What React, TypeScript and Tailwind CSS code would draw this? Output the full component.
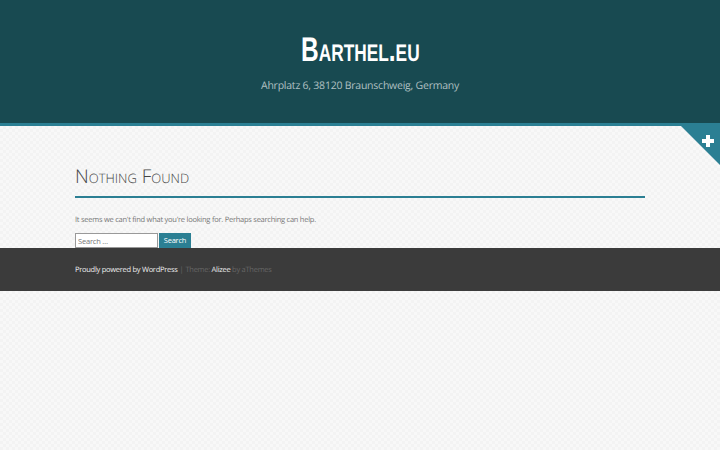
export default function App() {
  return (
    <div className="relative min-h-[450px] overflow-hidden bg-[#f6f6f6] bg-[repeating-conic-gradient(#f3f3f3_0_25%,#f8f8f8_0_50%)] bg-[length:6px_6px] font-['Open_Sans',sans-serif] antialiased [text-rendering:geometricPrecision]">
      <header className="h-[126px] border-b-[3px] border-[#2b7f93] bg-[#184a51] text-center">
        <h1 className="pt-[27px] font-['Liberation_Sans',sans-serif] text-[34px] leading-[46px] font-bold text-white [font-variant:small-caps]">
          <span className="inline-block scale-x-[0.72]">Barthel.eu</span>
        </h1>
        <p className="mt-[6px] text-[10.5px] leading-[14px] tracking-[-0.23px] text-[#b0c0c2]">Ahrplatz 6, 38120 Braunschweig, Germany</p>
      </header>
      <button className="absolute top-[125px] right-0 h-[40px] w-[40px] bg-[#2b7f93] [clip-path:polygon(0_0,100%_0,100%_100%)]" aria-label="Open">
        <svg className="absolute top-[10px] right-[6px]" width="12" height="12" viewBox="0 0 12 12">
          <path d="M4 0h4v4h4v4H8v4H4V8H0V4h4z" fill="#fff" />
        </svg>
      </button>
      <main className="mx-[75px] h-[122px] pt-[36px]">
        <h2 className="border-b-2 border-[#2b7f93] pb-[6px] text-[19px] leading-[28px] font-light text-[#444] [font-variant:small-caps]">Nothing Found</h2>
        <p className="mt-[15px] text-[7.5px] leading-[14px] tracking-[-0.25px] text-[#777]">It seems we can&apos;t find what you&apos;re looking for. Perhaps searching can help.</p>
        <form className="mt-[6px] flex gap-[1px]">
          <input className="h-[15px] w-[83px] border border-[#999] bg-white px-[2px] text-[7.5px] tracking-[-0.2px] text-[#777] placeholder:text-[#777]" placeholder="Search …" />
          <button className="h-[15px] w-[32px] bg-[#2b7f93] text-[7.5px] tracking-[-0.2px] text-white" type="button">Search</button>
        </form>
      </main>
      <footer className="flex h-[43px] items-center bg-[#3b3b3b] px-[75px] pt-[3px] text-[7.5px] tracking-[-0.27px] text-[#666]">
        <span className="text-[#eee]">Proudly powered by WordPress</span>
        <span className="mx-[2px]">|</span>
        <span>Theme:&nbsp;</span>
        <span className="text-[#eee]">Alizee</span>
        <span>&nbsp;by aThemes</span>
      </footer>
    </div>
  );
}
